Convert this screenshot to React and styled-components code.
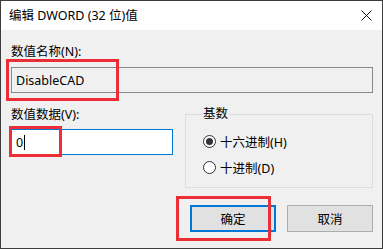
import React from 'react'
import styled, { createGlobalStyle } from 'styled-components'

const GlobalStyle = createGlobalStyle`
  html, body {
    margin: 0;
    padding: 0;
    background: #f0f0f0;
  }
  body {
    font-family: "Noto Sans", "Noto Sans CJK SC", sans-serif;
    font-size: 12.5px;
    color: #000;
  }
`

const Window = styled.div`
  width: 383px;
  height: 249px;
  box-sizing: border-box;
  border: 1px solid #3c3c3c;
  background: #f0f0f0;
  display: flex;
  flex-direction: column;
`

const TitleBar = styled.div`
  height: 29px;
  background: #fff;
  display: flex;
  align-items: center;
  justify-content: space-between;
  padding: 0 8px 0 8px;
  flex-shrink: 0;
`

const Title = styled.span`
  font-size: 12.5px;
  line-height: 16px;
`

const CloseIcon = styled.svg`
  width: 11px;
  height: 11px;
  margin-right: 2px;
`

const Body = styled.div`
  padding: 14px 9px 0 10px;
  display: flex;
  flex-direction: column;
`

const Label = styled.div`
  line-height: 16px;
  height: 16px;
`

const Field = styled.div`
  position: relative;
  margin-top: ${(p) => p.gap}px;
`

const TextBox = styled.div`
  box-sizing: border-box;
  height: 26px;
  border: 1px solid ${(p) => (p.focused ? '#0078d7' : '#8a8a8a')};
  background: ${(p) => (p.focused ? '#fff' : '#f0f0f0')};
  display: flex;
  align-items: center;
  padding-left: 4px;
  font-size: 12.5px;
`

const Caret = styled.span`
  display: inline-block;
  width: 1px;
  height: 15px;
  background: #000;
  margin-left: 1px;
`

const Mark = styled.div`
  position: absolute;
  left: ${(p) => p.x}px;
  top: ${(p) => p.y}px;
  width: ${(p) => p.w}px;
  height: ${(p) => p.h}px;
  box-sizing: border-box;
  border: 3px solid #ec2f37;
  pointer-events: none;
`

const Row = styled.div`
  display: flex;
  gap: 12px;
  margin-top: 14px;
`

const LeftCol = styled.div`
  width: 162px;
  display: flex;
  flex-direction: column;
`

const Group = styled.fieldset`
  flex: 1;
  margin: 1px 0 0 0;
  padding: 13px 0 6px 17px;
  border: 1px solid #dcdcdc;
  min-width: 0;
  height: 80px;
  box-sizing: border-box;
  display: flex;
  flex-direction: column;
  gap: 10px;
`

const Legend = styled.legend`
  padding: 0 1px;
  margin-left: -1px;
  line-height: 12px;
`

const RadioRow = styled.label`
  display: flex;
  align-items: center;
  gap: 4px;
  height: 16px;
`

const RadioDot = styled.span`
  width: 13px;
  height: 13px;
  box-sizing: border-box;
  border-radius: 50%;
  border: 1px solid #333;
  background: #fff;
  display: flex;
  align-items: center;
  justify-content: center;
  &::after {
    content: '';
    width: 7px;
    height: 7px;
    border-radius: 50%;
    background: ${(p) => (p.checked ? '#333' : 'transparent')};
  }
`

const ButtonRow = styled.div`
  display: flex;
  justify-content: flex-end;
  gap: 11px;
  margin-top: 17px;
`

const ButtonWrap = styled.div`
  position: relative;
`

const Button = styled.div`
  width: 86px;
  height: 27px;
  box-sizing: border-box;
  background: #e1e1e1;
  border: ${(p) => (p.primary ? '2px solid #0078d7' : '1px solid #adadad')};
  display: flex;
  align-items: center;
  justify-content: center;
`

const App = () => {
  return (
    <>
      <GlobalStyle />
      <Window>
        <TitleBar>
          <Title>编辑 DWORD (32 位)值</Title>
          <CloseIcon viewBox='0 0 11 11'>
            <path d='M0.5 0.5 L10.5 10.5 M10.5 0.5 L0.5 10.5' stroke='#111' strokeWidth='1' />
          </CloseIcon>
        </TitleBar>
        <Body>
          <Label>数值名称(N):</Label>
          <Field gap={7}>
            <TextBox>DisableCAD</TextBox>
            <Mark x={-5} y={-8} w={113} h={42} />
          </Field>
          <Row>
            <LeftCol>
              <Label>数值数据(V):</Label>
              <Field gap={6}>
                <TextBox focused>
                  0<Caret />
                </TextBox>
                <Mark x={-2} y={-3} w={53} h={31} />
              </Field>
            </LeftCol>
            <Group>
              <Legend>基数</Legend>
              <RadioRow>
                <RadioDot checked />
                十六进制(H)
              </RadioRow>
              <RadioRow>
                <RadioDot />
                十进制(D)
              </RadioRow>
            </Group>
          </Row>
          <ButtonRow>
            <ButtonWrap>
              <Button primary>确定</Button>
              <Mark x={-14} y={-9} w={95} h={45} />
            </ButtonWrap>
            <Button>取消</Button>
          </ButtonRow>
        </Body>
      </Window>
    </>
  )
}

export default App
